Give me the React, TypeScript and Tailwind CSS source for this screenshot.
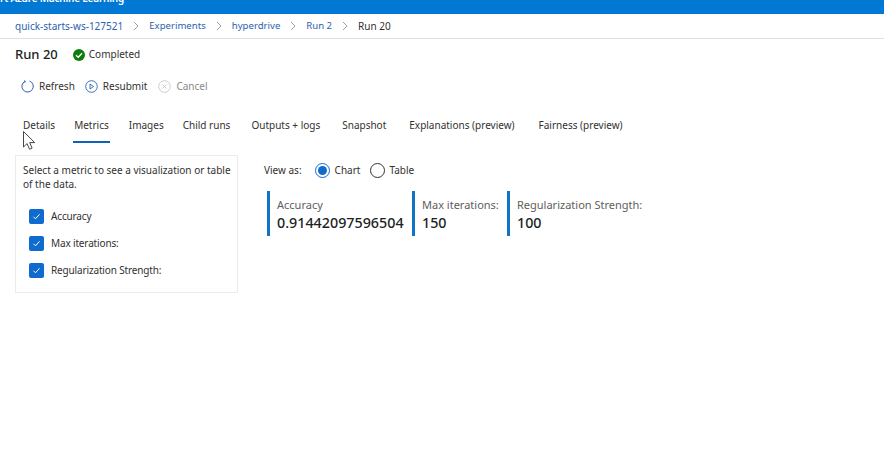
import React from 'react';

const font = { fontFamily: '"Noto Sans", "Open Sans", sans-serif' };

const crumbs = [
  { label: 'quick-starts-ws-127521', cls: 'text-[10px]' },
  { label: 'Experiments', cls: 'text-[9.6px]' },
  { label: 'hyperdrive', cls: 'text-[9.6px]' },
  { label: 'Run 2', cls: 'text-[9.6px]' },
];
const tabs = [
  { label: 'Details', cls: 'ml-[23px]' },
  { label: 'Metrics', cls: 'ml-[18px] px-[1px]' },
  { label: 'Images', cls: 'ml-[19px]' },
  { label: 'Child runs', cls: 'ml-[19px]' },
  { label: 'Outputs + logs', cls: 'ml-[21px]' },
  { label: 'Snapshot', cls: 'ml-[22px]' },
  { label: 'Explanations (preview)', cls: 'ml-[23px]' },
  { label: 'Fairness (preview)', cls: 'ml-[24px]' },
];
const metrics = ['Accuracy', 'Max iterations:', 'Regularization Strength:'];
const cards = [
  { title: 'Accuracy', value: '0.91442097596504', cls: 'w-[145px]' },
  { title: 'Max iterations:', value: '150', cls: 'w-[95px]' },
  { title: 'Regularization Strength:', value: '100', cls: 'w-[150px]' },
];

function Chevron() {
  return (
    <svg width="6" height="10" viewBox="0 0 6 10" className="mx-[10px]">
      <path d="M1 1l4 4-4 4" fill="none" stroke="#8a8886" strokeWidth="0.8" />
    </svg>
  );
}

function Check() {
  return (
    <span className="flex h-[15px] w-[15px] items-center justify-center rounded-[2px] bg-[#0f6cce]">
      <svg width="11" height="11" viewBox="0 0 11 11">
        <path d="M2.5 5.8l2 2 4-4.5" fill="none" stroke="#fff" strokeWidth="1" />
      </svg>
    </span>
  );
}

export default function App() {
  return (
    <div className="relative h-[456px] w-[884px] overflow-hidden bg-white text-[10px] text-[#323130]" style={font}>
      <div className="flex h-[14px] items-end overflow-hidden bg-[#0078d4] text-[10px] font-semibold leading-[14px] tracking-[-0.2px] text-white">
        <span className="mb-[9px] whitespace-nowrap">rt Azure Machine Learning</span>
      </div>

      <nav className="flex h-[25px] items-center border-b border-[#e1dfdd] pl-[15px]">
        {crumbs.map((c) => (
          <React.Fragment key={c.label}>
            <span className={`text-[#2b62ad] ${c.cls}`}>{c.label}</span>
            <Chevron />
          </React.Fragment>
        ))}
        <span>Run 20</span>
      </nav>

      <div className="mt-[6px] flex h-[20px] items-center pl-[15px]">
        <span className="text-[13px] font-medium text-[#201f1e]">Run 20</span>
        <svg width="12" height="12" viewBox="0 0 12 12" className="ml-[15px] mb-[1px]">
          <circle cx="6" cy="6" r="6" fill="#107c10" />
          <path d="M3 6.2l2.2 2.1L9 4.2" fill="none" stroke="#fff" strokeWidth="1.3" />
        </svg>
        <span className="ml-[4px] mb-[1px]">Completed</span>
      </div>

      <div className="mt-[11px] flex h-[20px] items-center pl-[21px]">
        <svg width="13" height="13" viewBox="0 0 13 13">
          <path d="M4 1.3A5.7 5.7 0 1 0 8.5 1" fill="none" stroke="#2b62ad" strokeWidth="1" />
          <path d="M3 .6l1.6.8-.8 1.5" fill="none" stroke="#2b62ad" strokeWidth="0.8" />
        </svg>
        <span className="ml-[5px]">Refresh</span>
        <svg width="13" height="13" viewBox="0 0 13 13" className="ml-[10px]">
          <circle cx="6.5" cy="6.5" r="5.8" fill="none" stroke="#2b62ad" strokeWidth="0.9" />
          <path d="M5 4l3.5 2.5L5 9z" fill="none" stroke="#2b62ad" strokeWidth="0.9" />
        </svg>
        <span className="ml-[5px]">Resubmit</span>
        <svg width="13" height="13" viewBox="0 0 13 13" className="ml-[11px]">
          <circle cx="6.5" cy="6.5" r="5.8" fill="none" stroke="#c8c6c4" strokeWidth="0.9" />
          <path d="M4.5 4.5l4 4M8.5 4.5l-4 4" fill="none" stroke="#c8c6c4" strokeWidth="0.9" />
        </svg>
        <span className="ml-[5px] text-[#8a8886]">Cancel</span>
      </div>

      <div className="mt-[20px] flex h-[39px] items-start">
        {tabs.map((t) => (
          <div
            key={t.label}
            className={`flex h-[27px] items-start whitespace-nowrap pt-[2px] ${t.cls} ${
              t.label === 'Metrics' ? 'border-b-2 border-[#0f62b8]' : ''
            }`}
          >
            {t.label}
          </div>
        ))}
      </div>

      <div className="flex items-start">
        <section className="ml-[15px] h-[138px] w-[223px] border border-[#edebe9] pl-[7px] pr-[4px] pt-[7px]">
          <p className="leading-[14px]">Select a metric to see a visualization or table of the data.</p>
          <ul className="mt-[18px] flex flex-col gap-[12px] pl-[6px]">
            {metrics.map((m) => (
              <li key={m} className="flex h-[15px] items-center gap-[7px]">
                <Check />
                <span className="tracking-[-0.15px]">{m}</span>
              </li>
            ))}
          </ul>
        </section>

        <section className="ml-[26px] pt-[8px]">
          <div className="flex h-[14px] items-center">
            <span>View as:</span>
            <span className="ml-[13px] flex h-[15px] w-[15px] items-center justify-center rounded-full border border-[#0f6cce]">
              <span className="h-[9px] w-[9px] rounded-full bg-[#0f6cce]" />
            </span>
            <span className="ml-[5px]">Chart</span>
            <span className="ml-[10px] h-[15px] w-[15px] rounded-full border border-[#323130]" />
            <span className="ml-[4px]">Table</span>
          </div>
          <div className="ml-[3px] mt-[14px] flex">
            {cards.map((c) => (
              <div key={c.title} className={`h-[45px] border-l-[3px] border-[#0f73c6] pl-[7px] ${c.cls}`}>
                <div className="mt-[7px] text-[11px] leading-[14px] text-[#605e5c]">{c.title}</div>
                <div className="mt-[2px] text-[14.3px] font-medium leading-[18px] text-[#201f1e]">{c.value}</div>
              </div>
            ))}
          </div>
        </section>
      </div>

      <svg width="14" height="20" viewBox="0 0 14 20" className="absolute left-[23px] top-[131px]">
        <path d="M.5.5v15.5l3.6-3.4 2.4 5.6 2.6-1.1-2.4-5.5h5z" fill="#fff" stroke="#333" strokeWidth="0.9" />
      </svg>
    </div>
  );
}
